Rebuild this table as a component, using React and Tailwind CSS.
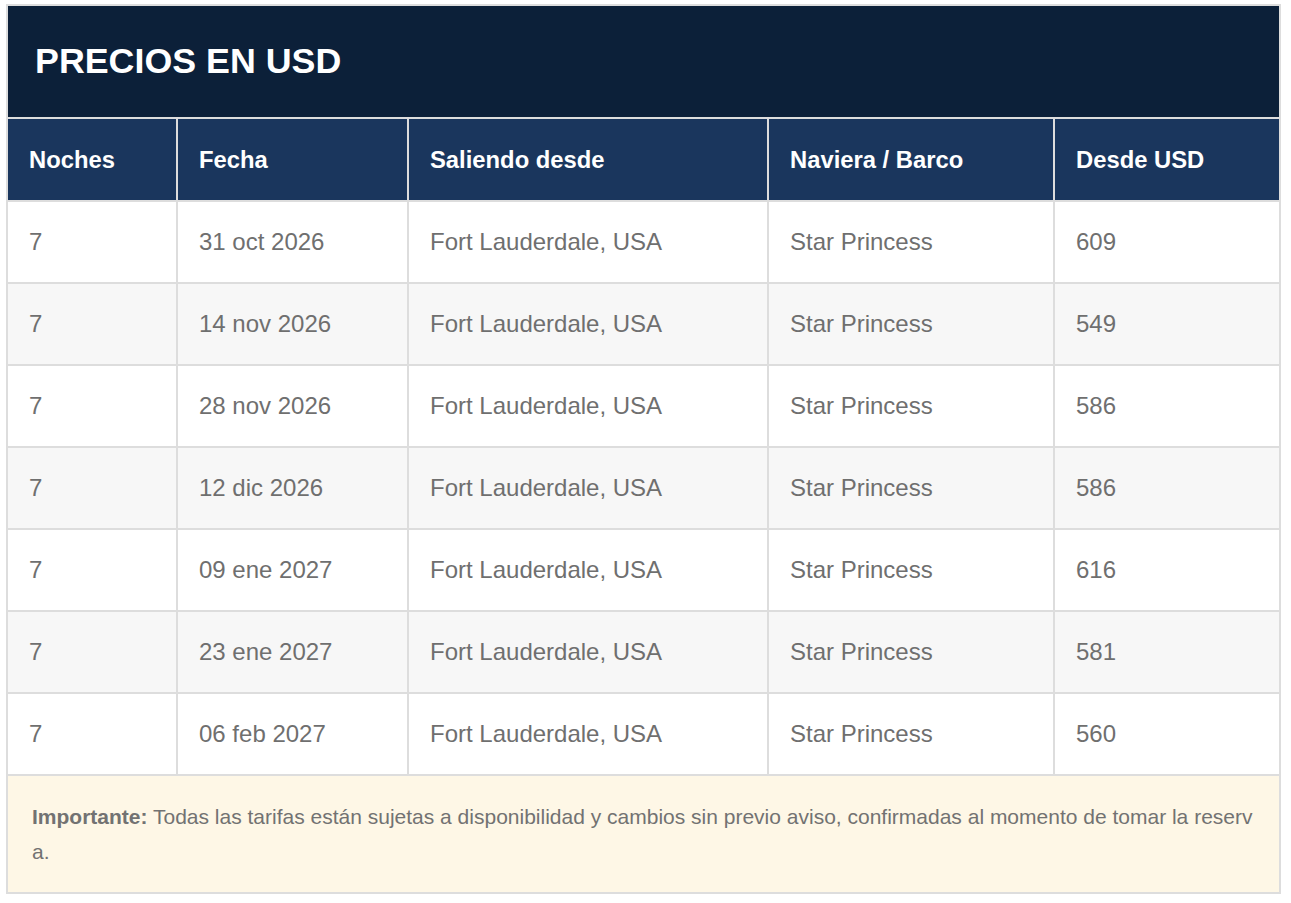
import React from "react";

const rows = [
  { noches: "7", fecha: "31 oct 2026", puerto: "Fort Lauderdale, USA", barco: "Star Princess", precio: "609" },
  { noches: "7", fecha: "14 nov 2026", puerto: "Fort Lauderdale, USA", barco: "Star Princess", precio: "549" },
  { noches: "7", fecha: "28 nov 2026", puerto: "Fort Lauderdale, USA", barco: "Star Princess", precio: "586" },
  { noches: "7", fecha: "12 dic 2026", puerto: "Fort Lauderdale, USA", barco: "Star Princess", precio: "586" },
  { noches: "7", fecha: "09 ene 2027", puerto: "Fort Lauderdale, USA", barco: "Star Princess", precio: "616" },
  { noches: "7", fecha: "23 ene 2027", puerto: "Fort Lauderdale, USA", barco: "Star Princess", precio: "581" },
  { noches: "7", fecha: "06 feb 2027", puerto: "Fort Lauderdale, USA", barco: "Star Princess", precio: "560" },
];

const headers = ["Noches", "Fecha", "Saliendo desde", "Naviera / Barco", "Desde USD"];

const App = () => {
  return (
    <div className="min-h-screen bg-white pt-[4px] pl-[6px]" style={{ fontFamily: '"Liberation Sans", Arial, sans-serif' }}>
      <div className="w-[1275px] border-2 border-[#dddddd]">
        {/* title */}
        <div className="h-[111px] bg-[#0c2039] flex items-center pl-[27px]">
          <h2 className="text-[35.8px] font-bold text-white leading-none">PRECIOS EN USD</h2>
        </div>
        {/* table */}
        <table className="w-full table-fixed border-collapse">
          <colgroup>
            <col className="w-[169px]" />
            <col className="w-[231px]" />
            <col className="w-[360px]" />
            <col className="w-[286px]" />
            <col className="w-[225px]" />
          </colgroup>
          <thead>
            <tr className="h-[83px] bg-[#1a365d]">
              {headers.map((h, i) => (
                <th
                  key={h}
                  className={`border-2 border-[#dddddd] text-left align-middle px-[21px] text-[23.8px] font-bold text-white ${
                    i === 0 ? "border-l-0" : ""
                  } ${i === headers.length - 1 ? "border-r-0" : ""}`}
                >
                  {h}
                </th>
              ))}
            </tr>
          </thead>
          <tbody>
            {rows.map((r, idx) => (
              <tr key={idx} className={`h-[82px] ${idx % 2 === 1 ? "bg-[#f7f7f7]" : "bg-white"}`}>
                <td className="border-2 border-l-0 border-[#dddddd] px-[21px] text-[24px] text-[#6f6f6f]">{r.noches}</td>
                <td className="border-2 border-[#dddddd] px-[21px] text-[24px] text-[#6f6f6f]">{r.fecha}</td>
                <td className="border-2 border-[#dddddd] px-[21px] text-[24px] text-[#6f6f6f]">{r.puerto}</td>
                <td className="border-2 border-[#dddddd] px-[21px] text-[24px] text-[#6f6f6f]">{r.barco}</td>
                <td className="border-2 border-r-0 border-[#dddddd] px-[21px] text-[24px] text-[#6f6f6f]">{r.precio}</td>
              </tr>
            ))}
          </tbody>
        </table>
        {/* nota */}
        <div className="bg-[#fef7e6] px-[24px] py-[23px] text-[21px] leading-[35px] text-[#727272] break-all">
          <strong className="font-bold">Importante:</strong> Todas las tarifas están sujetas a disponibilidad y cambios sin previo aviso, confirmadas al momento de tomar la reserva.
        </div>
      </div>
    </div>
  );
};

export default App;
